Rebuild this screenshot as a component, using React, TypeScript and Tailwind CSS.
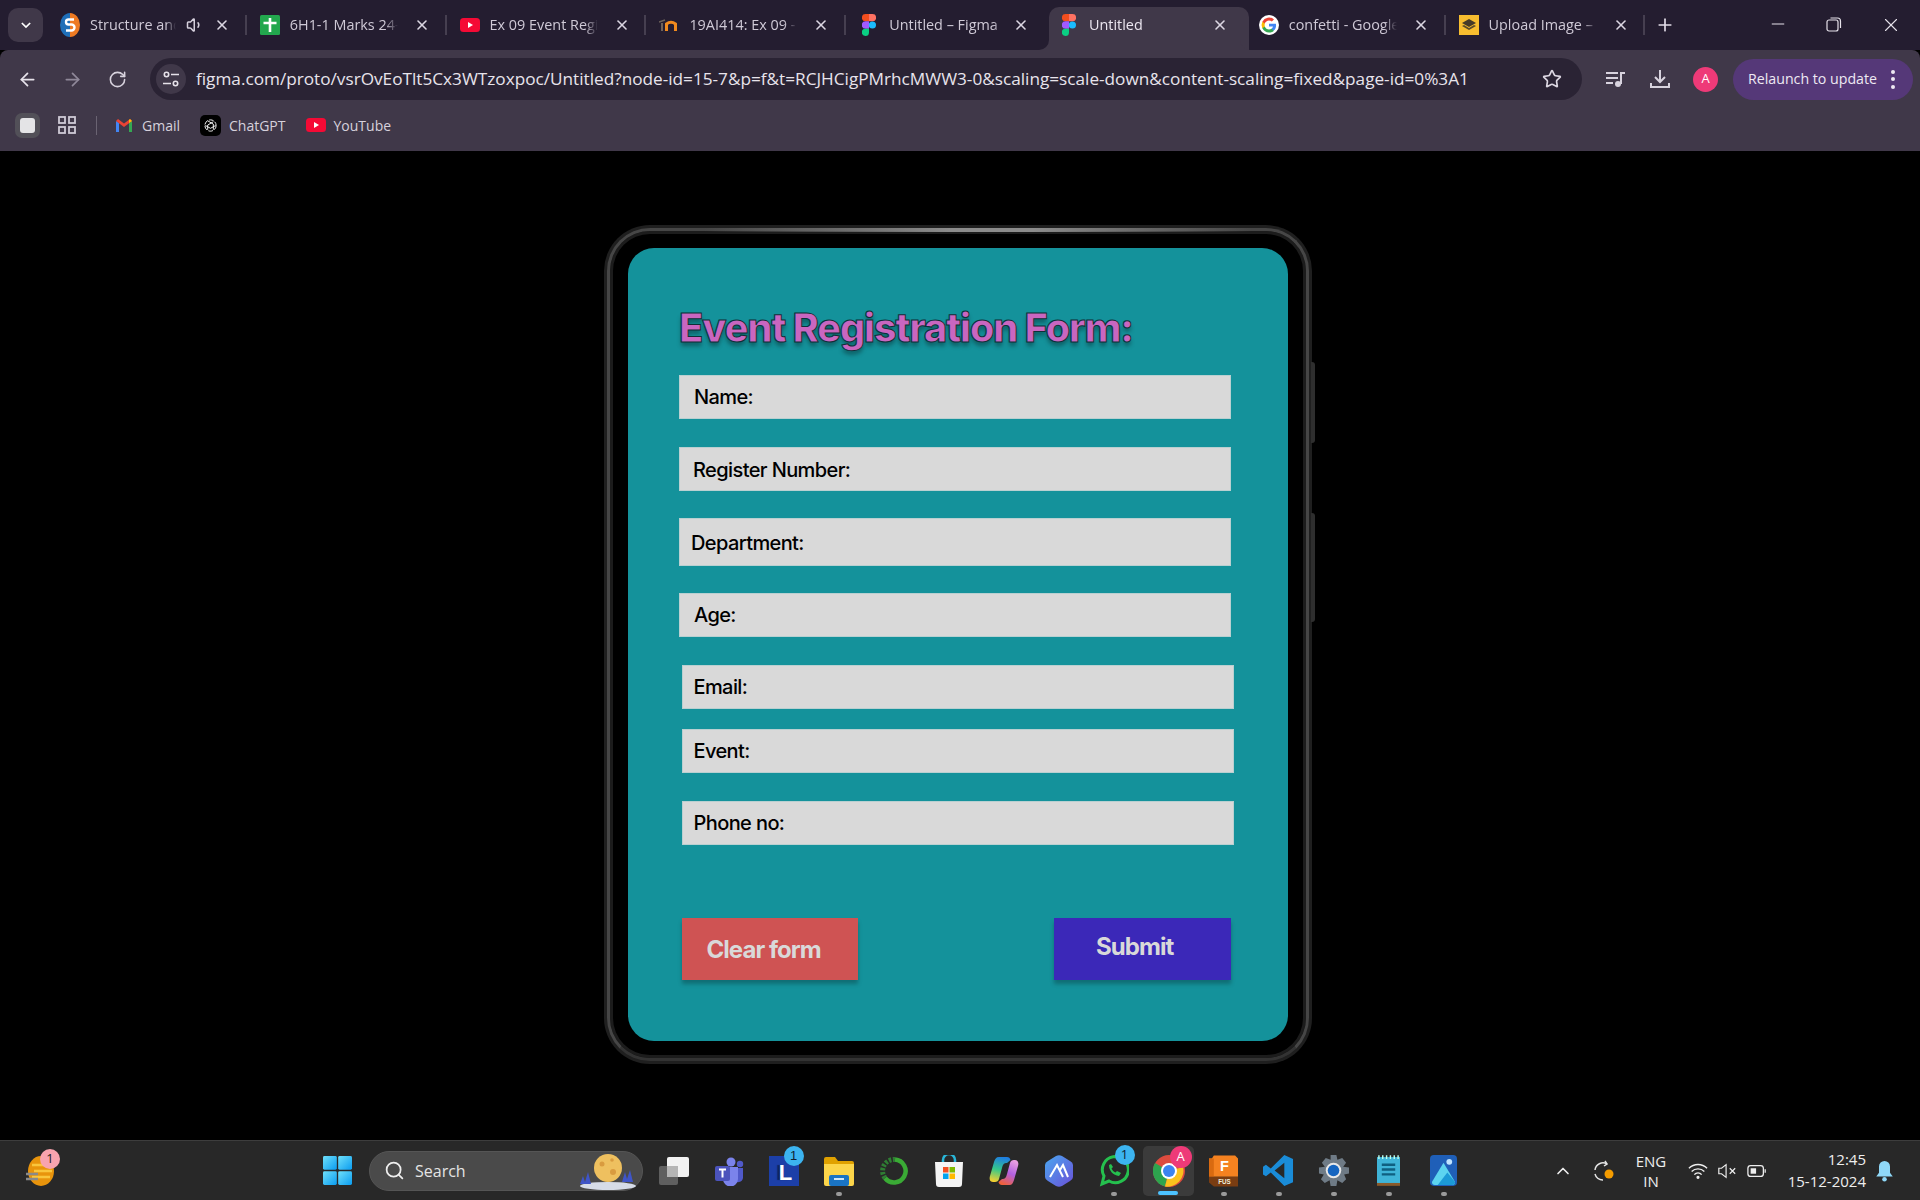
import React from "react";
import { ArrowLeft, ArrowRight, RotateCw, Star, X, Plus, Minus, Search, ChevronUp, Volume1 } from "lucide-react";

const ui = "font-['Open_Sans','Noto_Sans',sans-serif]";

function SIcon() {
  return (
    <svg viewBox="0 0 20 24" className="w-[20px] h-[24px]">
      <defs><clipPath id="sc"><ellipse cx="10" cy="12" rx="10" ry="12" /></clipPath></defs>
      <g clipPath="url(#sc)">
        <rect width="10" height="24" fill="#1f6fb8" />
        <rect x="10" width="10" height="24" fill="#ee7a22" />
      </g>
      <path d="M14 6.500H8.500a2 2 0 0 0 0 5h3a2.500 2.500 0 0 1 0 6H6" fill="none" stroke="#fff" strokeWidth="2.400" />
    </svg>
  );
}
function SheetIcon() {
  return (
    <svg viewBox="0 0 20 20" className="w-[20px] h-[20px]">
      <rect width="20" height="20" rx="1.500" fill="#23a84e" />
      <path d="M10 3v14M3.500 8h13" stroke="#fff" strokeWidth="2.600" />
    </svg>
  );
}
function YtIcon({ w = 20 }: { w?: number }) {
  return (
    <svg viewBox="0 0 20 14" style={{ width: w, height: w * 0.7 }}>
      <rect width="20" height="14" rx="3.500" fill="#f50a35" />
      <path d="M8 4l5 3-5 3z" fill="#fff" />
    </svg>
  );
}
function MoodleIcon() {
  return (
    <svg viewBox="0 0 20 14" className="w-[20px] h-[14px]">
      <path d="M3 13V5" stroke="#6d625a" strokeWidth="2" fill="none" />
      <path d="M0 4l6-2" stroke="#6d625a" strokeWidth="1.500" />
      <path d="M7.500 13V6q4.500-3.500 9 0V13" stroke="#f08a1e" strokeWidth="3" fill="none" />
    </svg>
  );
}
function FigmaIcon() {
  return (
    <svg viewBox="0 0 14 22" className="w-[14px] h-[22px]">
      <path d="M7 0H3.500a3.600 3.600 0 0 0 0 7.300H7z" fill="#f24e1e" />
      <path d="M7 0h3.500a3.600 3.600 0 0 1 0 7.300H7z" fill="#ff7262" />
      <path d="M7 7.300H3.500a3.600 3.600 0 0 0 0 7.400H7z" fill="#a259ff" />
      <circle cx="10.400" cy="11" r="3.600" fill="#1abcfe" />
      <path d="M3.500 14.700H7v3.700a3.600 3.600 0 1 1-3.500-3.700z" fill="#0acf83" />
    </svg>
  );
}
function GoogleIcon() {
  return (
    <svg viewBox="0 0 24 24" className="w-[20px] h-[20px] rounded-full bg-white">
      <path d="M20.500 12.200c0-.6-.1-1.200-.2-1.700H12v3.300h4.800a4.100 4.100 0 0 1-1.800 2.700v2.200h2.900c1.700-1.600 2.600-3.900 2.600-6.500z" fill="#4285f4" />
      <path d="M12 21c2.400 0 4.400-.8 5.900-2.200L15 16.500c-.8.500-1.800.9-3 .9-2.300 0-4.300-1.600-5-3.700H4v2.300A9 9 0 0 0 12 21z" fill="#34a853" />
      <path d="M7 13.700a5.400 5.400 0 0 1 0-3.400V8H4a9 9 0 0 0 0 8z" fill="#fbbc05" />
      <path d="M12 6.600c1.300 0 2.500.5 3.400 1.300L18 5.400A9 9 0 0 0 4 8l3 2.300c.7-2.100 2.700-3.700 5-3.700z" fill="#ea4335" />
    </svg>
  );
}
function UploadIcon() {
  return (
    <svg viewBox="0 0 20 20" className="w-[20px] h-[20px]">
      <rect width="20" height="20" fill="#f7bd2f" />
      <path d="M3 11l7 4 7-4-2-1-5 3-5-3z" fill="#5a4a2a" />
      <path d="M3 8l7-4 7 4-7 4z" fill="#453a28" />
    </svg>
  );
}

function Tab({ icon, title, active, speaker, sep = true, wide }: { icon: React.ReactNode; title: string; active?: boolean; speaker?: boolean; sep?: boolean; wide?: boolean }) {
  return (
    <div className={`relative flex items-center w-[199.8px] h-[43px] pb-[7px] shrink-0 ${active ? "bg-[#403849] rounded-t-[10px]" : ""}`}>
      {active && (
        <>
          <svg viewBox="0 0 10 10" className="absolute left-[-10px] bottom-0 w-[10px] h-[10px]"><path d="M10 0v10H0a10 10 0 0 0 10-10z" fill="#403849" /></svg>
          <svg viewBox="0 0 10 10" className="absolute right-[-1px] bottom-0 w-[10px] h-[10px]"><path d="M0 0v10h10A10 10 0 0 1 0 0z" fill="#403849" /></svg>
        </>
      )}
      <div className="w-[20px] ml-[10px] h-[24px] flex items-center justify-center shrink-0">{icon}</div>
      <div className={`ml-[10px] ${speaker ? "w-[86px]" : wide ? "w-[118px]" : "w-[108px]"} overflow-hidden whitespace-nowrap text-[14.4px] ${active ? "text-[#ebe6f0]" : "text-[#cfc9d6]"} [mask-image:linear-gradient(to_right,black_88%,transparent)]`}>{title}</div>
      {speaker && <Volume1 className="ml-[10px] w-[18px] h-[18px] text-[#d5d0dc]" />}
      <X className={`absolute ${active ? "left-[163px]" : "left-[164px]"} w-[16px] h-[16px] text-[#dcd7e2]`} strokeWidth={2.4} />
      {sep && !active && <div className="absolute right-[3px] top-[8px] w-[2px] h-[20px] bg-[#463f50]" />}
    </div>
  );
}

function TabStrip() {
  return (
    <div className={`flex items-end h-[50px] bg-[#241d30] ${ui}`}>
      <div className="self-start mt-[8px] ml-[8px] w-[35px] h-[34px] rounded-[10px] bg-[#403849] flex items-center justify-center">
        <svg viewBox="0 0 12 8" className="w-[10px] h-[7px]"><path d="M1 1l5 5 5-5" fill="none" stroke="#fff" strokeWidth="2" /></svg>
      </div>
      <div className="flex ml-[7px]">
        <Tab icon={<SIcon />} title="Structure and" speaker />
        <Tab icon={<SheetIcon />} title="6H1-1 Marks 24-" />
        <Tab icon={<YtIcon />} title="Ex 09 Event Regis" />
        <Tab icon={<MoodleIcon />} title="19AI414: Ex 09 -" />
        <Tab icon={<FigmaIcon />} title="Untitled – Figma" sep={false} wide />
        <Tab icon={<FigmaIcon />} title="Untitled" active wide />
        <Tab icon={<GoogleIcon />} title="confetti - Google" />
        <Tab icon={<UploadIcon />} title="Upload Image –" />
      </div>
      <Plus className="self-start mt-[15px] ml-[6.500px] w-[20px] h-[20px] text-[#e2dde8]" strokeWidth={2} />
      <div className="flex self-start mt-[14px] ml-[93px] text-[#e6e2ea]">
        <Minus className="w-[20px] h-[20px]" strokeWidth={1.2} />
        <svg viewBox="0 0 16 16" className="ml-[38px] w-[16px] h-[16px] mt-[2px]" fill="none" stroke="currentColor" strokeWidth="1.200"><rect x="1" y="4" width="11" height="11" rx="2" /><path d="M4.500 2h7a3 3 0 0 1 3 3v7" /></svg>
        <X className="ml-[38px] w-[22px] h-[22px]" strokeWidth={1.2} />
      </div>
    </div>
  );
}

function TuneIcon() {
  return (
    <svg viewBox="0 0 18 18" className="w-[18px] h-[18px]" fill="none" stroke="#e6e2ea" strokeWidth="1.600">
      <circle cx="4.500" cy="4.500" r="2.200" /><path d="M9 4.500h8M1 13.500h8" /><circle cx="13.500" cy="13.500" r="2.200" />
    </svg>
  );
}

function Toolbar() {
  return (
    <div className={`flex items-center h-[50px] bg-[#403849] rounded-t-[8px] pt-[8px] ${ui}`}>
      <ArrowLeft className="ml-[17px] w-[21px] h-[21px] text-[#e6e2ea]" strokeWidth={2} />
      <ArrowRight className="ml-[24px] w-[21px] h-[21px] text-[#8f8899]" strokeWidth={2} />
      <RotateCw className="ml-[25px] w-[19px] h-[19px] text-[#d8d3de]" strokeWidth={2} />
      <div className="ml-[23px] w-[1432px] h-[42px] rounded-full bg-[#2a2334] flex items-center">
        <div className="ml-[6px] w-[30px] h-[30px] rounded-full bg-[#403849] flex items-center justify-center"><TuneIcon /></div>
        <div className="ml-[10px] whitespace-nowrap text-[17.2px] text-[#e8e4ec]">figma.com/proto/vsrOvEoTlt5Cx3WTzoxpoc/Untitled?node-id=15-7&amp;p=f&amp;t=RCJHCigPMrhcMWW3-0&amp;scaling=scale-down&amp;content-scaling=fixed&amp;page-id=0%3A1</div>
        <Star className="ml-auto mr-[20px] w-[20px] h-[20px] text-[#dcd7e2]" strokeWidth={2} />
      </div>
      <svg viewBox="0 0 20 16" className="ml-[24px] w-[20px] h-[16px]" fill="#d8d3de">
        <rect y="1" width="12" height="2" /><rect y="6" width="12" height="2" /><rect y="11" width="7" height="2" /><circle cx="12" cy="13" r="3" /><rect x="14" y="1" width="2" height="12" /><rect x="14" y="1" width="5" height="2" />
      </svg>
      <svg viewBox="0 0 20 20" className="ml-[24px] w-[20px] h-[20px]" fill="none" stroke="#d8d3de" strokeWidth="2">
        <path d="M10 1v11M5 8l5 5 5-5M1 14v4h18v-4" />
      </svg>
      <div className="ml-[23px] w-[25px] h-[25px] rounded-full bg-[#ee3a78] text-white text-[13px] flex items-center justify-center">A</div>
      <div className="ml-[15px] w-[180px] h-[41px] rounded-full bg-[#553878] flex items-center text-[#eee9f3] text-[14.2px]">
        <span className="ml-[15px] whitespace-nowrap">Relaunch to update</span>
        <div className="ml-auto mr-[18px] flex flex-col gap-[3.500px]">
          <div className="w-[4px] h-[4px] rounded-full bg-[#eee9f3]" />
          <div className="w-[4px] h-[4px] rounded-full bg-[#eee9f3]" />
          <div className="w-[4px] h-[4px] rounded-full bg-[#eee9f3]" />
        </div>
      </div>
    </div>
  );
}

function Bookmarks() {
  return (
    <div className={`flex items-center h-[51px] pb-[1px] bg-[#403849] text-[14px] text-[#d6d1dc] ${ui}`}>
      <div className="ml-[15px] w-[25px] h-[25px] rounded-[7px] bg-[#525058] flex items-center justify-center"><div className="w-[15px] h-[15px] rounded-[3px] bg-[#e4e4e6]" /></div>
      <svg viewBox="0 0 18 18" className="ml-[18px] w-[18px] h-[18px]" fill="none" stroke="#cfcad6" strokeWidth="1.800"><rect x="1" y="1" width="6" height="6" /><rect x="11" y="1" width="6" height="6" /><rect x="1" y="11" width="6" height="6" /><rect x="11" y="11" width="6" height="6" /></svg>
      <div className="ml-[20px] w-[1px] h-[19px] bg-[#6a6372]" />
      <svg viewBox="0 0 18 14" className="ml-[18px] w-[18px] h-[14px]">
        <path d="M1 14V3l3 2v9z" fill="#4285f4" /><path d="M14 14V5l3-2v11z" fill="#34a853" /><path d="M1 3l8 6 8-6-2-2-6 4.500L3 1z" fill="#ea4335" /><path d="M14 5l3-2-2-2-1 1z" fill="#fbbc05" />
      </svg>
      <span className="ml-[9px]">Gmail</span>
      <div className="ml-[20px] w-[21px] h-[21px] rounded-[5px] bg-black flex items-center justify-center">
        <svg viewBox="0 0 16 16" className="w-[15px] h-[15px]" fill="none" stroke="#fff" strokeWidth="1"><circle cx="8" cy="8" r="6" strokeDasharray="5 1.500" /><path d="M5 3l6 3.500v6M11 4l-6 3.500v5M2.500 8l5.500 3 5.500-3" /></svg>
      </div>
      <span className="ml-[8px]">ChatGPT</span>
      <div className="ml-[20px]"><YtIcon /></div>
      <span className="ml-[8px]">YouTube</span>
    </div>
  );
}

function Field({ label, cls, tx }: { label: string; cls: string; tx: string }) {
  return (
    <div className={`w-[552px] bg-[#d9d9d9] border border-[#b9d0d1] flex items-center text-[20px] font-[450] tracking-[-0.6px] text-black ${cls}`}>
      <span className={tx}>{label}</span>
    </div>
  );
}

function Device() {
  return (
    <div className="relative w-[708px] h-[839px] rounded-[46px] bg-[#1f1f1f] p-[3px]">
      <div className="absolute right-[-3px] top-[137px] w-[4px] h-[81px] rounded-r-[3px] bg-[#2e2e2e]" />
      <div className="absolute right-[-3px] top-[288px] w-[4px] h-[109px] rounded-r-[3px] bg-[#2e2e2e]" />
      <div className="w-full h-full rounded-[43px] border-[3px] border-[#464646] border-b-[#333333] bg-black shadow-[inset_0_0_0_3px_#1c1c1c] pl-[18px] pt-[17px]">
        <div className="w-[660px] h-[793px] rounded-[26px] bg-[#14929b] pl-[51px] pt-[56px] font-['Inter',sans-serif]">
          <h1 className="text-[40px] leading-[48px] font-extrabold tracking-[-1.4px] text-[#c966c0] [-webkit-text-stroke:1px_#0f2f38] [text-shadow:0_4px_4px_rgba(0,0,0,0.35)]">Event Registration Form:</h1>
          <Field label="Name:" cls="mt-[23px] h-[44px]" tx="ml-[14px]" />
          <Field label="Register Number:" cls="mt-[28px] h-[44px]" tx="ml-[13px] mt-[2px]" />
          <Field label="Department:" cls="mt-[27px] h-[48px]" tx="ml-[11px] mt-[2px]" />
          <Field label="Age:" cls="mt-[27px] h-[44px]" tx="ml-[14px]" />
          <Field label="Email:" cls="mt-[28px] h-[44px] ml-[2.500px]" tx="ml-[11px]" />
          <Field label="Event:" cls="mt-[20px] h-[44px] ml-[2.500px]" tx="ml-[11px]" />
          <Field label="Phone no:" cls="mt-[28px] h-[44px] ml-[2.500px]" tx="ml-[11px]" />
          <div className="mt-[73px] ml-[2.500px] w-[549px] flex justify-between text-[24px] font-bold tracking-[-0.95px] text-[#d9d9d9]">
            <div className="w-[176px] h-[62px] bg-[#cf5353] shadow-[0_4px_4px_rgba(0,0,0,0.25)] flex items-center"><span className="ml-[25px] mt-[2px]">Clear form</span></div>
            <div className="w-[176.500px] h-[62px] bg-[#3b28b8] shadow-[0_4px_4px_rgba(0,0,0,0.25)] flex items-center"><span className="ml-[42px] mb-[4px]">Submit</span></div>
          </div>
        </div>
      </div>
      <div className="absolute top-[3px] left-[100px] right-[60px] h-[4px] bg-[linear-gradient(to_right,transparent,#8c8c8c_45%,#8c8c8c_60%,transparent)]" />
    </div>
  );
}

function Badge({ text, cls }: { text: string; cls: string }) {
  return <div className={`absolute w-[20px] h-[20px] rounded-full flex items-center justify-center text-[13px] leading-none ${cls}`}>{text}</div>;
}

function Slot({ children, dot, active }: { children: React.ReactNode; dot?: boolean; active?: boolean }) {
  return (
    <div className="relative w-[55px] h-[60px] shrink-0 flex items-center justify-center">
      {active && <div className="absolute left-[2px] top-[5px] w-[51px] h-[50px] rounded-[5px] bg-[#3b3b3b]" />}
      <div className="relative flex items-center justify-center">{children}</div>
      {dot && <div className="absolute top-[51px] left-[25px] w-[6px] h-[4px] rounded-full bg-[#9a9a9a]" />}
      {active && <div className="absolute top-[50px] left-[17px] w-[20px] h-[4px] rounded-full bg-[#4cc2ff]" />}
    </div>
  );
}

function WinLogo() {
  return (
    <svg viewBox="0 0 30 30" className="w-[29px] h-[29px]">
      <defs><linearGradient id="wl" x1="0" y1="0" x2="1" y2="1"><stop offset="0" stopColor="#6fe0fa" /><stop offset="1" stopColor="#0a9cf0" /></linearGradient></defs>
      <rect width="14.300" height="14.300" rx="1.500" fill="url(#wl)" /><rect x="15.700" width="14.300" height="14.300" rx="1.500" fill="url(#wl)" /><rect y="15.700" width="14.300" height="14.300" rx="1.500" fill="url(#wl)" /><rect x="15.700" y="15.700" width="14.300" height="14.300" rx="1.500" fill="url(#wl)" />
    </svg>
  );
}

function Taskbar() {
  return (
    <div className={`flex items-center h-[60px] bg-[#282828] border-t border-[#3d3d3d] text-white ${ui}`}>
      <div className="relative ml-[26px] w-[28px] h-[30px]">
        <svg viewBox="0 0 28 30" className="w-[28px] h-[30px]">
          <ellipse cx="15" cy="15" rx="13" ry="15" fill="#e8940c" />
          <path d="M6 9h18M8 15h18M6 21h18" stroke="#f9c53c" strokeWidth="2.500" />
          <path d="M0 18h12M0 23h12" stroke="#8a8a8a" strokeWidth="2.500" />
        </svg>
        <Badge text="1" cls="left-[14px] top-[-7px] bg-[#f8a3ae] text-[#222]" />
      </div>
      <div className="ml-[269px]"><WinLogo /></div>
      <div className="relative ml-[17px] w-[274px] h-[40px] rounded-full bg-[#4a4a4a] flex items-center border border-[#555]">
        <Search className="ml-[14px] w-[21px] h-[21px] text-[#eee]" strokeWidth={2} />
        <span className="ml-[10px] text-[16px] text-[#e4e4e4]">Search</span>
        <svg viewBox="0 0 58 40" className="absolute right-[6px] top-[0px] w-[58px] h-[40px]">
          <ellipse cx="30" cy="34" rx="28" ry="4" fill="#d6dce8" />
          <circle cx="30" cy="16" r="14" fill="#eec05f" />
          <circle cx="24" cy="12" r="2.500" fill="#d99b3f" /><circle cx="35" cy="20" r="3" fill="#d99b3f" /><circle cx="34" cy="8" r="1.800" fill="#d99b3f" />
          <path d="M2 32l3-8 2 6 3-10 3 12zM44 30l3-10 2 7 3-9 3 12z" fill="#3f55c8" />
        </svg>
      </div>
      <div className="ml-[3px] flex">
        <Slot>
          <svg viewBox="0 0 30 28" className="w-[30px] h-[28px]"><rect x="0" y="9" width="19" height="19" rx="2" fill="#5f5f5f" /><rect x="8" y="0" width="22" height="20" rx="2" fill="#f2f2f2" /><rect x="8" y="9" width="11" height="11" fill="#b5b5b5" /></svg>
        </Slot>
        <Slot>
          <svg viewBox="0 0 30 30" className="w-[30px] h-[30px]"><circle cx="17" cy="6" r="4.500" fill="#7b83eb" /><circle cx="26" cy="8" r="3.200" fill="#5059c9" /><path d="M20 12h9v10a5 5 0 0 1-9 2z" fill="#5059c9" /><path d="M9 11h15v12a7 7 0 0 1-15 0z" fill="#7b83eb" /><rect x="1" y="10" width="15" height="15" rx="2" fill="#4b53bc" /><path d="M5 13.500h7M8.500 13.500v8" stroke="#fff" strokeWidth="2" /></svg>
        </Slot>
        <Slot>
          <div className="relative w-[30px] h-[30px] bg-[#1c3fa8] flex items-center justify-center text-white font-bold text-[22px] leading-none pt-[5px] pl-[4px] font-['Liberation_Sans',sans-serif] [text-shadow:-3px_0_1px_#10255f]">L
            <Badge text="1" cls="left-[15px] top-[-10px] bg-[#3cb4f0] text-[#123] !font-normal [text-shadow:none]" />
          </div>
        </Slot>
        <Slot dot>
          <svg viewBox="0 0 30 30" className="w-[30px] h-[30px]"><path d="M0 3a2 2 0 0 1 2-2h9l3 4h14a2 2 0 0 1 2 2v3H0z" fill="#e0a100" /><path d="M0 8h30v20a2 2 0 0 1-2 2H2a2 2 0 0 1-2-2z" fill="#fcd54a" /><rect x="5" y="19" width="20" height="11" rx="2" fill="#1a74c4" /><rect x="10" y="22" width="10" height="2" fill="#cfe6f8" /></svg>
        </Slot>
        <Slot>
          <svg viewBox="0 0 30 30" className="w-[30px] h-[30px]" fill="none">
            <path d="M16 3.500A11.500 11.500 0 1 1 6 22" stroke="#3aaa35" strokeWidth="4.500" />
            <path d="M6 22A11.500 11.500 0 0 1 16 3.500" stroke="#2f7d33" strokeWidth="5" strokeDasharray="2.500 1.500" />
          </svg>
        </Slot>
        <Slot>
          <svg viewBox="0 0 30 32" className="w-[30px] h-[32px]"><path d="M9 8V5a6 6 0 0 1 12 0v3" fill="none" stroke="#29b6d8" strokeWidth="2.500" /><path d="M1 7h28l-1 22a3 3 0 0 1-3 3H5a3 3 0 0 1-3-3z" fill="#f4f4f4" /><rect x="9" y="12" width="5.500" height="5.500" fill="#f25022" /><rect x="15.500" y="12" width="5.500" height="5.500" fill="#7fba00" /><rect x="9" y="18.500" width="5.500" height="5.500" fill="#00a4ef" /><rect x="15.500" y="18.500" width="5.500" height="5.500" fill="#ffb900" /></svg>
        </Slot>
        <Slot>
          <svg viewBox="0 0 30 30" className="w-[30px] h-[30px]">
            <defs>
              <linearGradient id="cp1" x1="0.500" y1="0" x2="0.300" y2="1"><stop offset="0" stopColor="#1f7fe0" /><stop offset="0.5" stopColor="#35c88a" /><stop offset="1" stopColor="#f6d02f" /></linearGradient>
              <linearGradient id="cp2" x1="0.700" y1="0" x2="0.300" y2="1"><stop offset="0" stopColor="#e9a0e0" /><stop offset="0.5" stopColor="#b260e0" /><stop offset="1" stopColor="#f0603a" /></linearGradient>
            </defs>
            <path d="M10 1h8c2 0 3 1 3.500 3L18 7c-3 0-4 1-5 5l-3 11c-.5 2-2 3-4 3H4c-3 0-4-3-3-6L5 6c1-3 2-5 5-5z" fill="url(#cp1)" />
            <path d="M21 29h-8c-2 0-3-1-3.500-3l3.500-3c3 0 4-1 5-5l3-11c.5-2 2-3 4-3h1c3 0 4 3 3 6l-4 14c-1 3-2 5-4.500 5z" fill="url(#cp2)" />
          </svg>
        </Slot>
        <Slot>
          <svg viewBox="0 0 28 32" className="w-[28px] h-[32px]">
            <defs><linearGradient id="dl" x1="0" y1="0" x2="1" y2="1"><stop offset="0" stopColor="#4aa8f0" /><stop offset="1" stopColor="#6a50d8" /></linearGradient></defs>
            <path d="M11 1q3-1.500 6 0l8 5q3 1.500 3 4v12q0 2.500-3 4l-8 5q-3 1.500-6 0l-8-5q-3-1.500-3-4V10q0-2.500 3-4z" fill="url(#dl)" />
            <path d="M5 22l7-12 6 12M15 15l3-5 5 12" fill="none" stroke="#fff" strokeWidth="2" />
          </svg>
        </Slot>
        <Slot dot>
          <svg viewBox="0 0 30 32" className="w-[30px] h-[32px]" fill="none"><path d="M3 29l2-8a13 13 0 1 1 5 5z" stroke="#25c04e" strokeWidth="3" /><path d="M10 10c0 6 4 10 10 11l2-3-4-2-1.500 1.500c-2-1-3-2-4-4L14 12l-2-3z" fill="#25c04e" /></svg>
          <Badge text="1" cls="left-[16px] top-[-10px] bg-[#3cb4f0] text-[#123]" />
        </Slot>
        <Slot active>
          <svg viewBox="0 0 32 32" className="w-[32px] h-[32px]"><circle cx="16" cy="16" r="16" fill="#dd4b3e" /><path d="M16 16L2 8A16 16 0 0 0 12 31.500z" fill="#2da44e" /><path d="M16 16l14-4a16 16 0 0 1-18 19.500z" fill="#f9c21d" /><circle cx="16" cy="16" r="8" fill="#fff" /><circle cx="16" cy="16" r="6" fill="#3c84f0" /></svg>
          <Badge text="A" cls="left-[17px] top-[-9px] w-[22px] h-[22px] bg-[#ee3a78] text-[#fff]" />
        </Slot>
        <Slot dot>
          <svg viewBox="0 0 30 32" className="w-[29px] h-[32px]"><path d="M0 3h3l2-3h22l3 3v19H0z" fill="#f58220" /><path d="M0 3h5v19H0z" fill="#d96a10" /><path d="M0 22h30v10H5l-5-4z" fill="#7a3d12" /><text x="16" y="16" fontSize="15" fontWeight="700" fill="#fff" textAnchor="middle" fontFamily="Liberation Sans">F</text><text x="16" y="29.500" fontSize="6.500" fontWeight="700" fill="#eed" textAnchor="middle" fontFamily="Liberation Sans">FUS</text></svg>
        </Slot>
        <Slot dot>
          <svg viewBox="0 0 32 32" className="w-[31px] h-[31px]"><path d="M22 0l9 4v24l-9 4L8 18l-5 4-3-2V12l3-2 5 4z" fill="#1a8cd8" /><path d="M22 8L12 16l10 8z" fill="#282828" /></svg>
        </Slot>
        <Slot dot>
          <svg viewBox="0 0 32 32" className="w-[31px] h-[31px]"><path d="M13 0h6l1 5 5-2 4 5-3 4 6 1v6l-5 1 2 5-4 4-5-3-1 6h-6l-1-6-5 3-4-4 3-5-5-1v-6l6-1-3-4 4-5 5 2z" fill="#6f7b86" /><circle cx="16" cy="16" r="8" fill="#e8e8e8" /><circle cx="16" cy="16" r="6" fill="#1565c0" /></svg>
        </Slot>
        <Slot dot>
          <svg viewBox="0 0 24 32" className="w-[23px] h-[31px]"><rect y="2" width="24" height="28" fill="#3fb4d8" /><rect y="29" width="24" height="3" fill="#8a5a2b" /><path d="M2 0v4M6 0v4M10 0v4M14 0v4M18 0v4M22 0v4" stroke="#bfe" strokeWidth="1.500" /><path d="M5 10h14M5 15h14M5 20h14" stroke="#0f5f80" strokeWidth="2.500" /></svg>
        </Slot>
        <Slot dot>
          <svg viewBox="0 0 28 32" className="w-[27px] h-[31px]"><rect width="28" height="32" rx="4" fill="#1f5fb8" /><circle cx="20" cy="7" r="3" fill="#bfe3ff" /><path d="M2 28L14 8l12 20a3 3 0 0 1-3 3H5a3 3 0 0 1-3-3z" fill="#5cd4f0" /><path d="M8 31L18 18l8 10a3 3 0 0 1-3 3z" fill="#1c9ad6" /></svg>
        </Slot>
      </div>
      <ChevronUp className="ml-[82px] w-[20px] h-[20px] text-[#eee]" strokeWidth={2} />
      <svg viewBox="0 0 24 24" className="ml-[18px] w-[24px] h-[24px]" fill="none" stroke="#e4e4e4" strokeWidth="1.500"><path d="M4 11a8 8 0 0 1 12-6M4 15a8 8 0 0 0 8 6" /><path d="M14 2l2 3-3 2" /><circle cx="18" cy="15" r="4.500" fill="#f59c00" stroke="none" /></svg>
      <div className="ml-[21px] w-[30px] flex flex-col items-center text-[15px] leading-[20px] text-[#eee] whitespace-nowrap"><span>ENG</span><span>IN</span></div>
      <svg viewBox="0 0 22 18" className="ml-[22px] w-[20px] h-[18px]" fill="none" stroke="#eee" strokeWidth="1.500"><path d="M1 6a14 14 0 0 1 20 0M4 9.500a10 10 0 0 1 14 0M7 13a5 5 0 0 1 8 0" /><circle cx="11" cy="16" r="1" fill="#eee" /></svg>
      <svg viewBox="0 0 22 18" className="ml-[9px] w-[20px] h-[18px]" fill="none" stroke="#eee" strokeWidth="1.300"><path d="M2 6v6h3l5 4V2L5 6z" /><path d="M14 6l6 6M20 6l-6 6" /></svg>
      <svg viewBox="0 0 22 14" className="ml-[10px] w-[20px] h-[14px]" fill="none" stroke="#eee" strokeWidth="1.400"><rect x="1" y="1" width="17" height="12" rx="3" /><rect x="4" y="4" width="6" height="6" fill="#eee" stroke="none" /><path d="M20 5v4" /></svg>
      <div className="ml-[19px] w-[80px] -mt-[2px] flex flex-col items-end text-[15px] leading-[22px] text-[#eee] whitespace-nowrap"><span>12:45</span><span>15-12-2024</span></div>
      <svg viewBox="0 0 18 24" className="ml-[10px] w-[17px] h-[22px]"><path d="M9 1a6 6 0 0 1 6 6v7l3 4H0l3-4V7a6 6 0 0 1 6-6z" fill="#8fd8f8" /><circle cx="9" cy="21" r="2.500" fill="#8fd8f8" /></svg>
    </div>
  );
}

export default function App() {
  return (
    <div className="w-[1920px] h-[1200px] flex flex-col bg-black overflow-hidden">
      <TabStrip />
      <Toolbar />
      <Bookmarks />
      <main className="flex-1 pl-[604px] pt-[74px] bg-black">
        <Device />
      </main>
      <Taskbar />
    </div>
  );
}
